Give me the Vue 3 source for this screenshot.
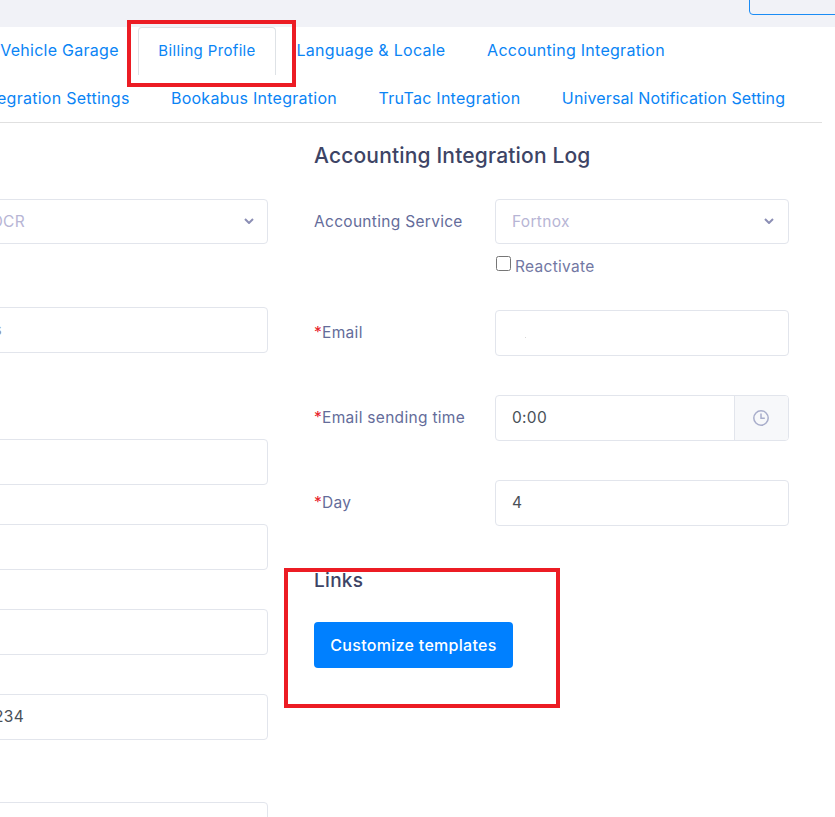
<script setup>
const rowOne = [
  { label: 'Vehicle Garage', width: 157 },
  { label: 'Billing Profile', width: 138, active: true },
  { label: 'Language & Locale', width: 190 },
  { label: 'Accounting Integration', width: 220 }
]
const rowTwo = [
  { label: 'Integration Settings', width: 193 },
  { label: 'Bookabus Integration', width: 208 },
  { label: 'TruTac Integration', width: 183 },
  { label: 'Universal Notification Setting', width: 265, narrow: true }
]
</script>

<template>
  <div class="page">
    <header class="topbar">
      <div class="top-button"></div>
    </header>

    <nav class="tabs">
      <div class="tab-row row-one">
        <a v-for="t in rowOne" :key="t.label" class="tab" :class="{ active: t.active }" :style="{ width: t.width + 'px' }">{{ t.label }}</a>
      </div>
      <div class="tab-row row-two">
        <a v-for="t in rowTwo" :key="t.label" class="tab" :class="{ narrow: t.narrow }" :style="{ width: t.width + 'px' }">{{ t.label }}</a>
      </div>
    </nav>

    <main class="form">
      <section class="col-left">
        <div class="box select gap-a"><span class="val val-ocr muted">OCR</span><svg class="chev" viewBox="0 0 10 6"><path d="M1 1l4 4 4-4" /></svg></div>
        <div class="box gap-b"><span class="val val-s">s</span></div>
        <div class="box gap-c"></div>
        <div class="box gap-c"></div>
        <div class="box gap-c"></div>
        <div class="box gap-a2"><span class="val val-num">1234</span></div>
        <div class="box"></div>
      </section>

      <section class="col-right">
        <h2 class="title">Accounting Integration Log</h2>

        <div class="field field-select">
          <label class="lab">Accounting Service</label>
          <div class="box select wide"><span class="muted">Fortnox</span><svg class="chev" viewBox="0 0 10 6"><path d="M1 1l4 4 4-4" /></svg></div>
        </div>
        <div class="check-row">
          <input id="react" type="checkbox" class="check" />
          <label for="react" class="check-label">Reactivate</label>
        </div>

        <div class="field">
          <label class="lab"><span class="req">*</span>Email</label>
          <div class="box wide"><i class="speck"></i></div>
        </div>

        <div class="field">
          <label class="lab"><span class="req">*</span>Email sending time</label>
          <div class="box wide group">
            <span class="group-val">0:00</span>
            <span class="addon">
              <svg class="clock" viewBox="0 0 18 18"><circle cx="9" cy="9" r="7.2" /><path d="M9 4.6V9.3h3.8" /></svg>
            </span>
          </div>
        </div>

        <div class="field">
          <label class="lab"><span class="req">*</span>Day</label>
          <div class="box wide">4</div>
        </div>

        <h2 class="title links">Links</h2>
        <button class="cta" type="button">Customize templates</button>
      </section>
    </main>

    <div class="mark mark-tab"></div>
    <div class="mark mark-links"></div>
  </div>
</template>

<style scoped>
.page {
  position: relative;
  width: 835px;
  height: 817px;
  overflow: hidden;
  background: #fff;
  font-family: Inter, "Open Sans", sans-serif;
  font-size: 15.5px;
  letter-spacing: 0.3px;
  color: #646c9a;
}
.topbar {
  height: 27px;
  background: #f1f2f7;
  display: flex;
  justify-content: flex-end;
}
.top-button {
  width: 96px;
  height: 25px;
  box-sizing: border-box;
  margin: -10px -10px 0 0;
  border: 1px solid #1b8cf5;
  border-radius: 4px;
}
.tabs {
  width: 822px;
  height: 96px;
  box-sizing: border-box;
  border-bottom: 1px solid #e0e0e0;
}
.tab-row {
  display: flex;
  height: 48px;
}
.row-one { margin-left: -19px; }
.row-two { margin-left: -43px; }
.tab {
  flex: none;
  height: 48px;
  line-height: 47px;
  text-align: center;
  white-space: nowrap;
  font-size: 16px;
  letter-spacing: 0.27px;
  color: #0a84f5;
  box-sizing: border-box;
}
.tab.narrow { letter-spacing: 0.13px; }
.tab.active {
  border: 1px solid #dee2e6;
  border-bottom: 0;
  border-radius: 4px 4px 0 0;
  line-height: 46px;
  font-size: 15px;
  letter-spacing: 0.35px;
}
.form {
  display: flex;
  gap: 46px;
  margin-left: -8px;
}
.col-left {
  width: 276px;
  flex: none;
  padding-top: 76px;
}
.col-right {
  width: 475px;
  flex: none;
  padding-top: 18px;
}
.box {
  height: 46px;
  box-sizing: border-box;
  border: 1px solid #e2e5ec;
  border-radius: 4px;
  background: #fff;
  color: #495057;
  display: flex;
  align-items: center;
  padding: 0 14px 1px 16px;
  position: relative;
}
.select {
  height: 45px;
  justify-content: space-between;
}
.gap-a { margin-bottom: 63px; }
.gap-b { margin-bottom: 86px; }
.gap-c { margin-bottom: 39px; }
.gap-a2 { margin-bottom: 62px; }
.col-left .box { padding: 0 13px 1px 0; }
.val {
  display: flex;
  justify-content: flex-end;
  white-space: nowrap;
}
.val-ocr { width: 32px; }
.val-s { width: 9px; color: #8a8f9c; }
.val-num { width: 31px; }
.muted { color: #b7b5d5; }
.chev {
  width: 10px;
  height: 6px;
  flex: none;
  fill: none;
  stroke: #8c8fb5;
  stroke-width: 2;
}
.title {
  margin: 0 0 28px;
  height: 30px;
  line-height: 30px;
  font-size: 21px;
  font-weight: 500;
  letter-spacing: 0.17px;
  color: #3d4465;
}
.field {
  display: flex;
  align-items: center;
  margin-bottom: 39px;
}
.field-select { margin-bottom: 0; }
.lab {
  width: 181px;
  flex: none;
  white-space: nowrap;
  padding-bottom: 1px;
}
.wide { width: 294px; flex: none; }
.req { color: #e8202a; }
.check-row {
  display: flex;
  align-items: flex-end;
  height: 27px;
  margin: 0 0 39px 181px;
  gap: 4px;
}
.check {
  width: 15px;
  height: 15px;
  margin: 0 0 0 1px;
  accent-color: #0a84f5;
}
.check-label {
  line-height: 18px;
  margin-bottom: -5px;
  color: #7278a3;
}
.speck {
  position: absolute;
  left: 29px;
  top: 26px;
  width: 1px;
  height: 1px;
  background: #d8d8d8;
}
.group { padding-right: 0; overflow: hidden; }
.group-val { flex: 1; }
.addon {
  width: 54px;
  height: 45px;
  box-sizing: border-box;
  margin-bottom: -1px;
  flex: none;
  background: #f7f8fa;
  border-left: 1px solid #e2e5ec;
  display: flex;
  align-items: center;
  justify-content: center;
  padding-right: 2px;
}
.clock {
  width: 18px;
  height: 18px;
  fill: none;
  stroke: #a9aecb;
  stroke-width: 1.5;
}
.links {
  height: 32px;
  line-height: 32px;
  margin: 0 0 25px;
  font-size: 19px;
  letter-spacing: 0.3px;
}
.cta {
  display: block;
  width: 199px;
  height: 46px;
  padding: 0;
  border: 0;
  border-radius: 4px;
  background: #0080ff;
  color: #fff;
  font: inherit;
  font-size: 16px;
  font-weight: 500;
  letter-spacing: 0.3px;
}
.mark {
  position: absolute;
  box-sizing: border-box;
  border: 4px solid #ec1c24;
  pointer-events: none;
}
.mark-tab {
  left: 127px;
  top: 20px;
  width: 169px;
  height: 67px;
}
.mark-links {
  left: 284px;
  top: 568px;
  width: 276px;
  height: 140px;
}
</style>
<style>
html, body { margin: 0; overflow: hidden; background: #fff; }
</style>
